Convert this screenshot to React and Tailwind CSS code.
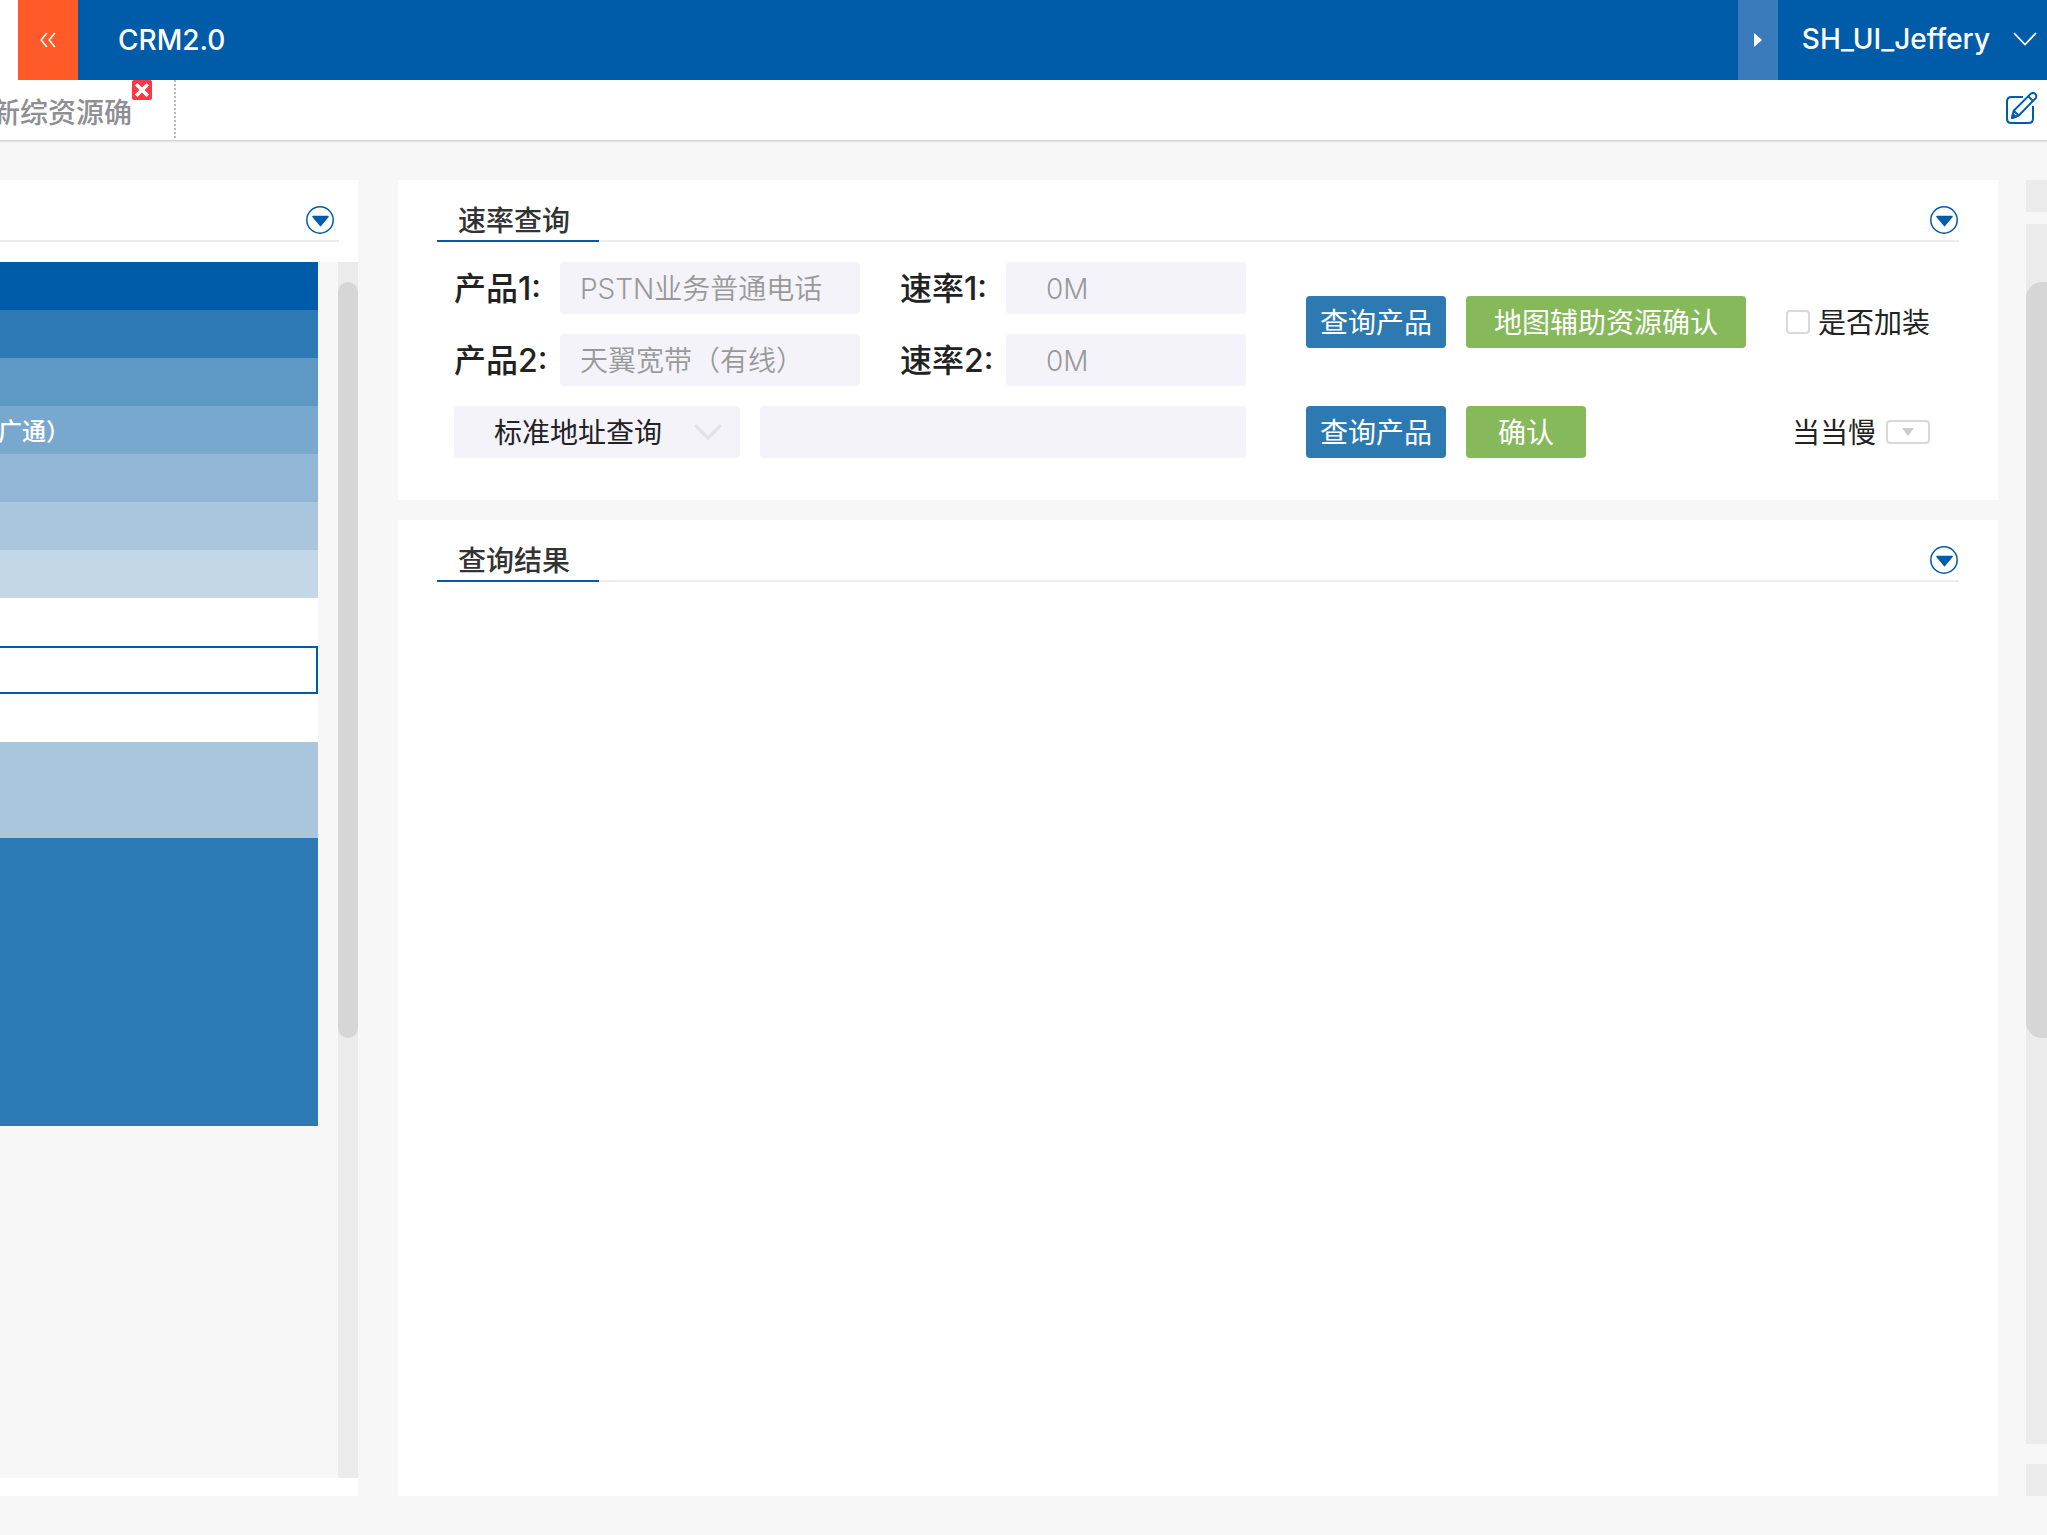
import React, { useState } from 'react';
import clsx from 'clsx';

const treeRows = [
  { id: 1, className: 'h-12 bg-[#005ca8]' },
  { id: 2, className: 'h-12 bg-[#2c79b4]' },
  { id: 3, className: 'h-12 bg-[#5e99c6]' },
  { id: 4, className: 'h-12 bg-[#79a8ce]', label: '广通）' },
  { id: 5, className: 'h-12 bg-[#92b6d5]' },
  { id: 6, className: 'h-12 bg-[#aac6dd]' },
  { id: 7, className: 'h-12 bg-[#c4d7e7]' },
  { id: 8, className: 'h-12 bg-white' },
  { id: 9, className: 'h-12 bg-white border-2 border-l-0 border-[#005ca8]' },
  { id: 10, className: 'h-12 bg-white' },
  { id: 11, className: 'h-24 bg-[#aac6dd]' },
  { id: 12, className: 'h-72 bg-[#2c7ab5]' }
];

function CollapseButton() {
  return (
    <button type="button" aria-label="收起" className="size-7 shrink-0">
      <svg viewBox="0 0 28 28" className="size-7">
        <circle cx="14" cy="14" r="13.2" fill="#fff" stroke="#005ca8" strokeWidth="1.5" />
        <path d="M7 10.6h15l-7.5 9z" fill="#005ca8" stroke="#005ca8" strokeWidth="1.6" strokeLinejoin="round" />
      </svg>
    </button>
  );
}

function Panel({ title, className, children }) {
  return (
    <section className={clsx('bg-white', className)}>
      <div className="mx-[39px] pr-px h-[62px] border-b-2 border-[#ececec] flex items-end justify-between">
        <h2 className="-mb-0.5 w-[162px] pl-[21px] border-b-2 border-[#005ca8] text-[28px] leading-[38px] font-medium text-[#333]">{title}</h2>
        <div className="h-[34px]"><CollapseButton /></div>
      </div>
      {children}
    </section>
  );
}

function ProductRow({ index, product, rate }) {
  return (
    <div className="grid grid-cols-[106px_minmax(0,5fr)_146px_minmax(0,4fr)]">
      <label htmlFor={`product-${index}`} className="text-[32px] leading-[54px] h-[52px] font-medium">产品{index}:</label>
      <input
        id={`product-${index}`}
        type="text"
        placeholder={product}
        className="w-full h-[52px] pt-0.5 px-5 rounded bg-[#f4f3fa] text-[28px] font-[350] placeholder:text-[#999] outline-none"
      />
      <label htmlFor={`rate-${index}`} className="pl-10 text-[32px] leading-[54px] h-[52px] font-medium">速率{index}:</label>
      <input
        id={`rate-${index}`}
        type="text"
        placeholder={rate}
        className="w-full h-[52px] pt-0.5 px-10 rounded bg-[#f4f3fa] text-[28px] font-[350] placeholder:text-[#999] outline-none"
      />
    </div>
  );
}

function ActionButton({ className, children }) {
  return (
    <button type="button" className={clsx('h-[52px] pt-0.5 rounded text-[28px] text-white whitespace-nowrap', className)}>
      {children}
    </button>
  );
}

export default function App() {
  const [addon, setAddon] = useState(false);
  const [address, setAddress] = useState('');

  return (
    <div className="min-h-screen flex flex-col overflow-hidden bg-[#f7f7f7] text-[#222] font-['Inter','Noto_Sans_CJK_SC',sans-serif]">
      <header className="h-20 pl-[18px] flex bg-white">
        <button type="button" aria-label="收起菜单" className="w-[60px] bg-[#ff5a28] flex items-center justify-center">
          <svg viewBox="0 0 16 16" className="size-4" fill="none" stroke="#fff" strokeWidth="1.6">
            <path d="M6.8 1 1.2 8l5.6 7M14.8 1 9.2 8l5.6 7" />
          </svg>
        </button>
        <div className="flex-1 pl-10 flex items-center bg-[#005ca8]">
          <h1 className="text-[28px] font-medium text-white">CRM2.0</h1>
        </div>
        <button type="button" aria-label="展开" className="w-10 bg-[#397bba] flex items-center justify-center">
          <svg viewBox="0 0 8 14" className="w-2 h-3.5"><path d="M0 0l8 7-8 7z" fill="#fff" /></svg>
        </button>
        <button type="button" className="pl-6 pr-2.5 pb-0.5 flex items-center gap-[23px] bg-[#005ca8] text-[28px] font-medium text-white">
          SH_UI_Jeffery
          <svg viewBox="0 0 24 14" className="w-6 h-3.5" fill="none" stroke="#fff" strokeWidth="1.8">
            <path d="M1 1l11 11.5L23 1" />
          </svg>
        </button>
      </header>

      <nav className="h-[61px] flex items-start justify-between bg-white border-b border-[#d4d4d4] shadow-[0_1px_1px_#e4e4e4]">
        <div className="-ml-2 h-[58px] pr-[22px] flex items-start border-r-2 border-dotted border-[#bbb]">
          <a href="#resource" className="text-[28px] leading-[66px] font-medium text-[#8e8e93]">新综资源确</a>
          <button type="button" aria-label="关闭" className="size-5 rounded-xs bg-[#fb3843]">
            <svg viewBox="0 0 20 20" className="size-5" stroke="#fff" strokeWidth="3.6">
              <path d="M4.2 4.2l11.6 11.6M15.8 4.2L4.2 15.8" />
            </svg>
          </button>
        </div>
        <button type="button" aria-label="编辑" className="mt-3 mr-2">
          <svg viewBox="0 0 34 34" className="size-[34px]" fill="none" stroke="#005ca8" strokeWidth="2" strokeLinejoin="round">
            <path d="M18 5H6.500Q2 5 2 9.500V26.500Q2 31 6.500 31H23.500Q28 31 28 26.500V14" />
            <path d="M7 26l1.700-7.300L25.600 1.900a3.300 3.300 0 0 1 4.700 0a3.300 3.300 0 0 1 0 4.700L13.800 23.500z" />
            <path d="M23.300 4.300l4.600 4.600M8.700 18.700l5.100 4.800" />
            <path d="M7 26l.9-3.900 2.900 2.800z" fill="#005ca8" />
          </svg>
        </button>
      </nav>

      <div className="flex-1 flex pt-[39px] pb-[39px]">
        <aside className="w-[358px] shrink-0 flex flex-col bg-white pb-[18px]">
          <div className="mr-[19px] pr-[5px] h-[62px] border-b-2 border-[#ececec] flex items-end justify-end">
            <div className="h-[34px]"><CollapseButton /></div>
          </div>
          <div className="mt-5 flex-1 flex bg-[#f7f7f7]">
            <ul className="flex-1 mr-5">
              {treeRows.map((row) => (
                <li key={row.id} className={row.className}>
                  {row.label && <span className="-ml-0.5 text-[24px] leading-[52px] font-medium text-white">{row.label}</span>}
                </li>
              ))}
            </ul>
            <div className="w-5 pt-5 bg-[#ebebeb]">
              <div className="h-[756px] rounded-full bg-[#d6d6d6]" />
            </div>
          </div>
        </aside>

        <main className="ml-10 flex-1 min-w-0 flex flex-col gap-5">
          <Panel title="速率查询">
            <form className="pt-5 pb-[42px] pl-14 pr-[68px] flex gap-[60px]">
              <div className="flex-1 min-w-0 flex flex-col gap-5">
                <ProductRow index={1} product="PSTN业务普通电话" rate="0M" />
                <ProductRow index={2} product="天翼宽带（有线）" rate="0M" />
                <div className="flex gap-5">
                  <div className="relative w-[286px] shrink-0">
                    <select aria-label="查询方式" className="appearance-none w-full h-[52px] pt-0.5 pl-10 pr-14 rounded bg-[#f4f3fa] text-[28px] outline-none">
                      <option>标准地址查询</option>
                    </select>
                    <svg viewBox="0 0 28 16" className="absolute right-[18px] top-[18px] w-7 h-4 pointer-events-none" fill="none" stroke="#e3e3e5" strokeWidth="3.2" strokeLinecap="round" strokeLinejoin="round">
                      <path d="M2 2l12 12L26 2" />
                    </svg>
                  </div>
                  <input
                    type="text"
                    aria-label="地址"
                    className="flex-1 min-w-0 h-[52px] pt-0.5 px-5 rounded bg-[#f4f3fa] text-[28px] outline-none"
                    value={address}
                    onChange={(e) => setAddress(e.target.value)}
                  />
                </div>
              </div>

              <div className="w-[624px] shrink-0 pt-[34px] flex flex-col gap-[58px]">
                <div className="flex items-center gap-5">
                  <ActionButton className="w-[140px] bg-[#2d7ab3]">查询产品</ActionButton>
                  <ActionButton className="w-[280px] bg-[#86b95a]">地图辅助资源确认</ActionButton>
                  <label className="ml-auto flex items-center gap-2 text-[28px]">
                    <input
                      type="checkbox"
                      className="appearance-none size-6 rounded border-2 border-[#d9d9d9] bg-white checked:bg-[#2d7ab3]"
                      checked={addon}
                      onChange={(e) => setAddon(e.target.checked)}
                    />
                    <span className="pt-0.5">是否加装</span>
                  </label>
                </div>
                <div className="flex items-center gap-5">
                  <ActionButton className="w-[140px] bg-[#2d7ab3]">查询产品</ActionButton>
                  <ActionButton className="w-[120px] bg-[#86b95a]">确认</ActionButton>
                  <div className="ml-auto flex items-center gap-2.5">
                    <label htmlFor="speed" className="pt-0.5 text-[28px]">当当慢</label>
                    <div className="relative flex">
                      <select id="speed" className="appearance-none w-11 h-6 rounded border-2 border-[#d9d9d9] bg-white text-transparent outline-none" />
                      <svg viewBox="0 0 12 8" className="absolute left-4 top-2 w-3 h-2 pointer-events-none">
                        <path d="M0 0h12L6 8z" fill="#ccc" />
                      </svg>
                    </div>
                  </div>
                </div>
              </div>
            </form>
          </Panel>

          <Panel title="查询结果" className="flex-1" />
        </main>

        <div className="ml-7 w-[21px] shrink-0 flex flex-col">
          <div className="h-8 bg-[#ebebeb]" />
          <div className="mt-3 mb-5 flex-1 pt-[58px] bg-[#ebebeb]">
            <div className="h-[756px] rounded-l-2xl bg-[#d6d6d6]" />
          </div>
          <div className="h-8 bg-[#ebebeb]" />
        </div>
      </div>
    </div>
  );
}
